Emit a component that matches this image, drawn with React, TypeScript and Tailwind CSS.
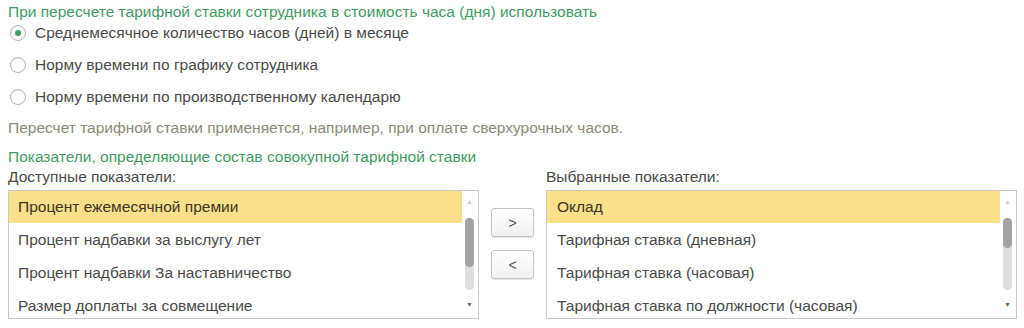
import { useState } from "react";

const available = [
  "Процент ежемесячной премии",
  "Процент надбавки за выслугу лет",
  "Процент надбавки За наставничество",
  "Размер доплаты за совмещение",
];

const chosen = [
  "Оклад",
  "Тарифная ставка (дневная)",
  "Тарифная ставка (часовая)",
  "Тарифная ставка по должности (часовая)",
];

const modes = [
  "Среднемесячное количество часов (дней) в месяце",
  "Норму времени по графику сотрудника",
  "Норму времени по производственному календарю",
];

function Radio({ checked }: { checked: boolean }) {
  return (
    <span className="flex h-[16px] w-[16px] items-center justify-center rounded-full border border-[#b5b5b5] bg-white shadow-[inset_0_1px_1px_rgba(0,0,0,0.08)]">
      {checked && <span className="h-[6px] w-[6px] rounded-full bg-[#3f9c63]" />}
    </span>
  );
}

function ListBox({
  items,
  thumbHeight,
  textPad,
}: {
  items: string[];
  thumbHeight: number;
  textPad: string;
}) {
  return (
    <div className="flex h-[129px] w-[471px] overflow-hidden border border-[#c9c9c9] bg-white">
      <div className="flex-1 overflow-hidden">
        {items.map((it, i) => (
          <div
            key={it}
            className={
              "flex items-center whitespace-nowrap " +
              textPad +
              (i === 0 ? " h-[32px] bg-[#fbe08c] text-[#3d3424]" : " h-[33px] text-[#4a4a4a]")
            }
          >
            {it}
          </div>
        ))}
      </div>
      <div className="relative w-[16px]">
        <span className="absolute left-[4px] top-[7px] text-[7px] leading-none text-[#cfcfcf]">▲</span>
        <div className="absolute left-[3px] top-[27px] h-[72px] w-[9px] rounded-[5px] bg-[#dedede]">
          <div
            className="absolute left-0 top-0 w-[9px] rounded-[5px] bg-[#a3a3a3]"
            style={{ height: thumbHeight }}
          />
        </div>
        <span className="absolute left-[4px] top-[110px] text-[7px] leading-none text-[#6b6b6b]">▼</span>
      </div>
    </div>
  );
}

function MoveButton({ label }: { label: string }) {
  return (
    <button
      type="button"
      className="flex h-[29px] w-[43px] items-center justify-center rounded-[3px] border border-[#c4c4c4] bg-gradient-to-b from-white to-[#f1f1f1] text-[14px] text-[#555] shadow-[0_1px_1px_rgba(0,0,0,0.12)]"
    >
      {label}
    </button>
  );
}

export default function App() {
  const [mode] = useState(0);

  return (
    <div className="h-[328px] w-[1024px] overflow-hidden bg-white px-[8px] pt-[3px] font-['Liberation_Sans',Arial,sans-serif] text-[15.5px] leading-[18px] text-[#4a4a4a]">
      <div className="text-[#3f9c63]">
        При пересчете тарифной ставки сотрудника в стоимость часа (дня) использовать
      </div>

      <div className="flex flex-col gap-[8px]">
        {modes.map((m, i) => (
          <div key={m} className="flex h-[24px] items-center gap-[9px] pl-[2px]">
            <Radio checked={i === mode} />
            <span>{m}</span>
          </div>
        ))}
      </div>

      <div className="mt-[10px] text-[#8a8a78]">
        Пересчет тарифной ставки применяется, например, при оплате сверхурочных часов.
      </div>

      <div className="mt-[11px] text-[#3f9c63]">
        Показатели, определяющие состав совокупной тарифной ставки
      </div>

      <div className="mt-[2px] flex">
        <div className="flex flex-col gap-[4px]">
          <div>Доступные показатели:</div>
          <ListBox items={available} thumbHeight={49} textPad="pl-[9px]" />
        </div>

        <div className="ml-[12px] mr-[12px] flex flex-col gap-[13px] pt-[40px]">
          <MoveButton label=">" />
          <MoveButton label="<" />
        </div>

        <div className="flex flex-col gap-[4px]">
          <div>Выбранные показатели:</div>
          <ListBox items={chosen} thumbHeight={30} textPad="pl-[10px]" />
        </div>
      </div>
    </div>
  );
}
